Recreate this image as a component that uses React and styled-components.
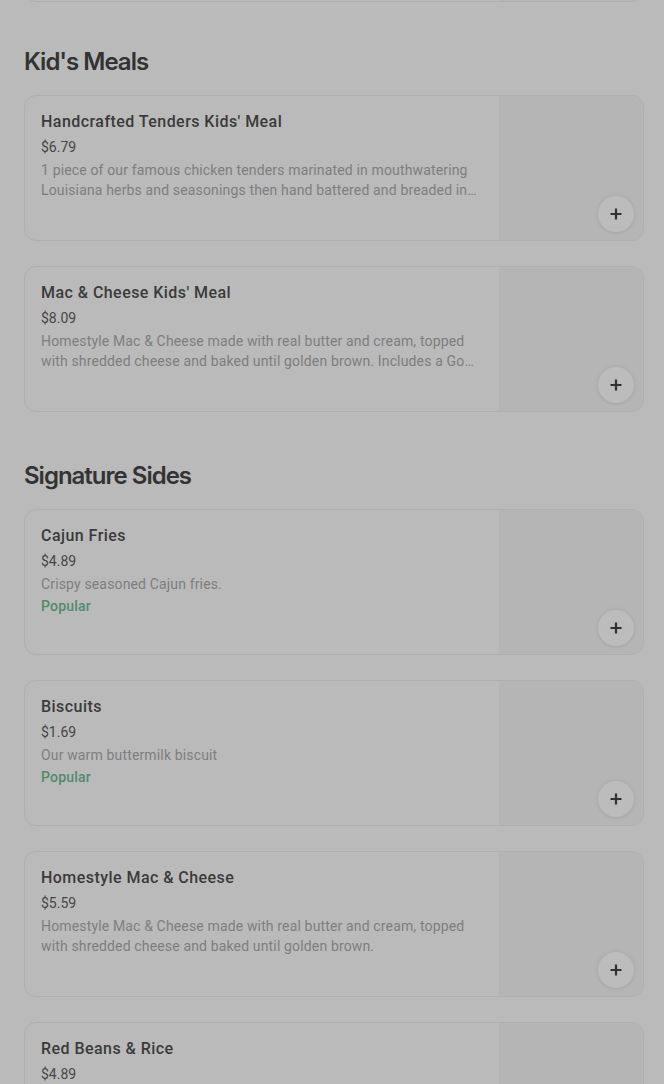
import React from 'react';
import styled, { createGlobalStyle } from 'styled-components';

const GlobalStyle = createGlobalStyle`
  html, body {
    margin: 0;
    padding: 0;
    background: #bababa;
  }
  body {
    font-family: Roboto, "Noto Sans", "Liberation Sans", sans-serif;
    overflow: hidden;
  }
`;

const Page = styled.div`
  width: 664px;
  height: 1084px;
  overflow: hidden;
  box-sizing: border-box;
  padding: 0 20px 0 24px;
  background: #bababa;
`;

// the previous card, scrolled almost out of view
const ScrolledOff = styled.div`
  margin-top: -144px;
`;

const Section = styled.section`
  margin-top: ${(p) => (p.$first ? '44px' : '48px')};
`;

const Heading = styled.h2`
  margin: 0 0 17px;
  font-family: Inter, "Liberation Sans", sans-serif;
  font-size: 24px;
  line-height: 32px;
  font-weight: 600;
  letter-spacing: -1px;
  color: #333333;
`;

const List = styled.div`
  display: flex;
  flex-direction: column;
  gap: 25px;
`;

const Card = styled.div`
  display: flex;
  width: 620px;
  box-sizing: border-box;
  border: 1px solid #afafaf;
  border-radius: 12px;
  overflow: hidden;
  background: #bababa;
`;

const Info = styled.div`
  flex: 1;
  min-width: 0;
  padding: 15px 16px 0 16px;
`;

const Title = styled.div`
  font-size: 16px;
  line-height: 22px;
  font-weight: 500;
  letter-spacing: 0.45px;
  color: #3a3a3a;
`;

const Price = styled.div`
  margin-top: 4px;
  font-size: 14px;
  line-height: 20px;
  color: #464646;
`;

const Desc = styled.div`
  margin-top: 3px;
  font-size: 14px;
  line-height: 20px;
  letter-spacing: 0.15px;
  color: #7e7e7e;
  display: -webkit-box;
  -webkit-line-clamp: 2;
  -webkit-box-orient: vertical;
  overflow: hidden;
`;

const Badge = styled.div`
  margin-top: 2px;
  font-size: 14px;
  line-height: 20px;
  font-weight: 500;
  letter-spacing: 0.2px;
  color: #508b6d;
`;

const Thumb = styled.div`
  position: relative;
  width: 144px;
  height: 144px;
  flex-shrink: 0;
  background: #b5b5b5;
`;

const AddButton = styled.button`
  position: absolute;
  right: 9px;
  bottom: 8px;
  width: 36px;
  height: 36px;
  padding: 0;
  border: none;
  border-radius: 50%;
  background: #bcbcbc;
  box-shadow: 0 0 5px rgba(0, 0, 0, 0.08), 0 1px 3px rgba(0, 0, 0, 0.04);
  display: flex;
  align-items: center;
  justify-content: center;
  color: #303030;
`;

const PlusIcon = () => (
  <svg width="12" height="12" viewBox="0 0 12 12" fill="none">
    <path d="M6 0.5v11M0.5 6h11" stroke="currentColor" strokeWidth="2.2" />
  </svg>
);

const sections = [
  {
    name: "Kid's Meals",
    items: [
      {
        title: "Handcrafted Tenders Kids' Meal",
        price: '$6.79',
        desc: '1 piece of our famous chicken tenders marinated in mouthwatering Louisiana herbs and seasonings then hand battered and breaded in our signature buttermilk breading. Served with a side and a drink.',
      },
      {
        title: "Mac & Cheese Kids' Meal",
        price: '$8.09',
        desc: 'Homestyle Mac & Cheese made with real butter and cream, topped with shredded cheese and baked until golden brown. Includes a Go\u200BGo squeeZ applesauce and a drink.',
      },
    ],
  },
  {
    name: 'Signature Sides',
    items: [
      { title: 'Cajun Fries', price: '$4.89', desc: 'Crispy seasoned Cajun fries.', popular: true },
      { title: 'Biscuits', price: '$1.69', desc: 'Our warm buttermilk biscuit', popular: true },
      {
        title: 'Homestyle Mac & Cheese',
        price: '$5.59',
        desc: 'Homestyle Mac & Cheese made with real butter and cream, topped with shredded cheese and baked until golden brown.',
      },
      { title: 'Red Beans & Rice', price: '$4.89', desc: 'Slow-simmered red beans with Cajun seasonings, served over rice.' },
    ],
  },
];

const MenuCard = ({ item }) => (
  <Card>
    <Info>
      <Title>{item.title}</Title>
      <Price>{item.price}</Price>
      <Desc>{item.desc}</Desc>
      {item.popular && <Badge>Popular</Badge>}
    </Info>
    <Thumb>
      <AddButton aria-label={`Add ${item.title}`}>
        <PlusIcon />
      </AddButton>
    </Thumb>
  </Card>
);

export default function App() {
  return (
    <>
      <GlobalStyle />
      <Page>
        <ScrolledOff>
          <Card>
            <Info />
            <Thumb />
          </Card>
        </ScrolledOff>
        {sections.map((section, i) => (
          <Section key={section.name} $first={i === 0}>
            <Heading>{section.name}</Heading>
            <List>
              {section.items.map((item) => (
                <MenuCard key={item.title} item={item} />
              ))}
            </List>
          </Section>
        ))}
      </Page>
    </>
  );
}
